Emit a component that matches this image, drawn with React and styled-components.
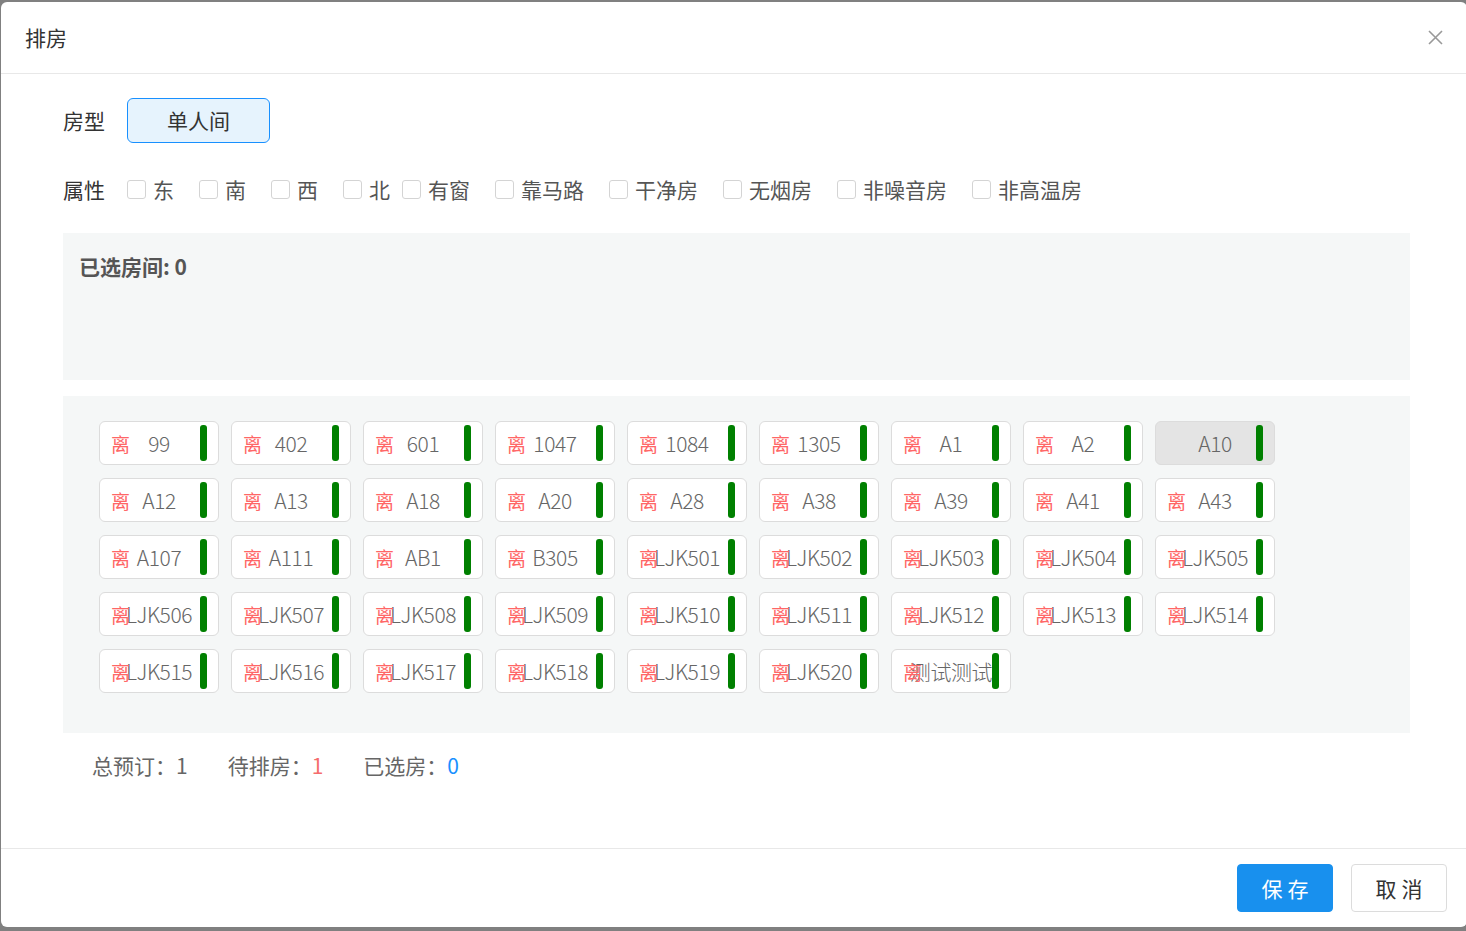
import React from 'react'
import styled, { createGlobalStyle } from 'styled-components'

const GlobalStyle = createGlobalStyle`
    html, body {
        margin: 0;
        padding: 0;
        background: #808080;
        overflow: hidden;
        font-family: "Noto Sans CJK SC", "Open Sans", sans-serif;
    }
`;

const Modal = styled.div`
    margin: 2px 0 0 1px;
    width: 1466px;
    height: 925px;
    background: #fff;
    border-radius: 6px;
    display: flex;
    flex-direction: column;
`;

const Header = styled.div`
    height: 72px;
    border-bottom: 1px solid #e8e8e8;
    display: flex;
    align-items: center;
    justify-content: space-between;
    padding: 0 22px 1px 24px;
    box-sizing: border-box;
`;

const Title = styled.div`
    font-size: 21px;
    color: #333;
`;

const Close = styled.button`
    border: none;
    background: none;
    padding: 0;
    width: 20px;
    height: 20px;
    display: flex;
    align-items: center;
    justify-content: center;
    cursor: pointer;
`;

const Body = styled.div`
    flex: 1;
    padding: 24px 57px 0 62px;
`;

const FieldRow = styled.div`
    display: flex;
    align-items: center;
    height: 44px;
    margin-top: ${p => p.top || 0}px;
`;

const Label = styled.div`
    font-size: 21px;
    color: #333;
    width: 64px;
    flex-shrink: 0;
`;

const TypeButton = styled.button`
    width: 143px;
    height: 45px;
    border: 1px solid #1890ff;
    background: #e6f3fd;
    border-radius: 6px;
    font-family: inherit;
    font-size: 21px;
    color: #333;
    padding: 0;
`;

const CheckItem = styled.label`
    display: flex;
    align-items: center;
    margin-right: ${p => (p.tight ? 12 : 25)}px;
    font-size: 21px;
    color: #555;
    cursor: pointer;
`;

const Box = styled.span`
    width: 19px;
    height: 19px;
    border: 1px solid #d4d4d4;
    border-radius: 3px;
    box-sizing: border-box;
    background: #fff;
    margin-right: 7px;
`;

const Panel = styled.div`
    background: #f5f7f7;
    margin-top: ${p => p.top}px;
`;

const SelectedPanel = styled(Panel)`
    height: 147px;
    padding: 18px 16px 0;
    box-sizing: border-box;
`;

const SelectedText = styled.div`
    font-size: 21px;
    font-weight: bold;
    color: #555;
`;

const RoomPanel = styled(Panel)`
    height: 337px;
    overflow-y: scroll;
    box-sizing: border-box;
    padding: 25px 0 0 36px;

    &::-webkit-scrollbar {
        width: 9px;
        background: #dedede;
    }
    &::-webkit-scrollbar-thumb {
        background: #dedede;
    }
`;

const RoomGrid = styled.div`
    display: grid;
    grid-template-columns: repeat(9, 120px);
    gap: 13px 12px;
`;

const Room = styled.div`
    position: relative;
    height: 44px;
    box-sizing: border-box;
    border: 1px solid #dcdcdc;
    border-radius: 6px;
    background: ${p => (p.busy ? '#e4e4e4' : '#fff')};
    display: flex;
    align-items: center;
    justify-content: center;
    font-size: 21px;
    font-weight: 300;
    letter-spacing: -0.4px;
    color: #666;
    white-space: nowrap;
`;

const Leave = styled.span`
    position: absolute;
    left: 11px;
    top: 50%;
    transform: translateY(-50%);
    font-size: 19px;
    font-weight: 400;
    letter-spacing: 0;
    color: #f66;
`;

const Bar = styled.span`
    position: absolute;
    right: 11px;
    top: 3px;
    width: 7px;
    height: 36px;
    border-radius: 3px;
    background: #008000;
`;

const Totals = styled.div`
    display: flex;
    gap: 40px;
    padding: 17px 0 0 29px;
    font-size: 21px;
    color: #666;
`;

const Num = styled.span`
    color: ${p => p.color || '#666'};
`;

const Footer = styled.div`
    height: 78px;
    border-top: 1px solid #e8e8e8;
    display: flex;
    justify-content: flex-end;
    align-items: center;
    gap: 18px;
    padding-right: 20px;
`;

const Button = styled.button`
    width: 96px;
    height: 48px;
    border-radius: 4px;
    font-family: inherit;
    font-size: 21px;
    letter-spacing: 5px;
    padding: 0 0 0 5px;
    border: 1px solid ${p => (p.primary ? '#1890ee' : '#dcdcdc')};
    background: ${p => (p.primary ? '#1890ee' : '#fff')};
    color: ${p => (p.primary ? '#fff' : '#333')};
`;

const attrs = ['东', '南', '西', '北', '有窗', '靠马路', '干净房', '无烟房', '非噪音房', '非高温房'];

const rooms = [
    '99', '402', '601', '1047', '1084', '1305', 'A1', 'A2', 'A10',
    'A12', 'A13', 'A18', 'A20', 'A28', 'A38', 'A39', 'A41', 'A43',
    'A107', 'A111', 'AB1', 'B305', 'LJK501', 'LJK502', 'LJK503', 'LJK504', 'LJK505',
    'LJK506', 'LJK507', 'LJK508', 'LJK509', 'LJK510', 'LJK511', 'LJK512', 'LJK513', 'LJK514',
    'LJK515', 'LJK516', 'LJK517', 'LJK518', 'LJK519', 'LJK520', '测试测试',
];

const App = () => {
    return (
        <>
            <GlobalStyle />
            <Modal>
                <Header>
                    <Title>排房</Title>
                    <Close aria-label="close">
                        <svg width="15" height="15" viewBox="0 0 15 15">
                            <path d="M1 1 L14 14 M14 1 L1 14" stroke="#999" strokeWidth="1.6" fill="none" />
                        </svg>
                    </Close>
                </Header>
                <Body>
                    <FieldRow>
                        <Label>房型</Label>
                        <TypeButton>单人间</TypeButton>
                    </FieldRow>
                    <FieldRow top={25}>
                        <Label>属性</Label>
                        {attrs.map(a => (
                            <CheckItem key={a} tight={a === '北'}>
                                <Box />
                                {a}
                            </CheckItem>
                        ))}
                    </FieldRow>
                    <SelectedPanel top={22}>
                        <SelectedText>已选房间: 0</SelectedText>
                    </SelectedPanel>
                    <RoomPanel top={16}>
                        <RoomGrid>
                            {rooms.map(r => (
                                <Room key={r} busy={r === 'A10'}>
                                    {r !== 'A10' && <Leave>离</Leave>}
                                    {r}
                                    <Bar />
                                </Room>
                            ))}
                        </RoomGrid>
                    </RoomPanel>
                    <Totals>
                        <span>总预订：<Num>1</Num></span>
                        <span>待排房：<Num color="#f56c6c">1</Num></span>
                        <span>已选房：<Num color="#1890ff">0</Num></span>
                    </Totals>
                </Body>
                <Footer>
                    <Button primary>保存</Button>
                    <Button>取消</Button>
                </Footer>
            </Modal>
        </>
    )
}

export default App
